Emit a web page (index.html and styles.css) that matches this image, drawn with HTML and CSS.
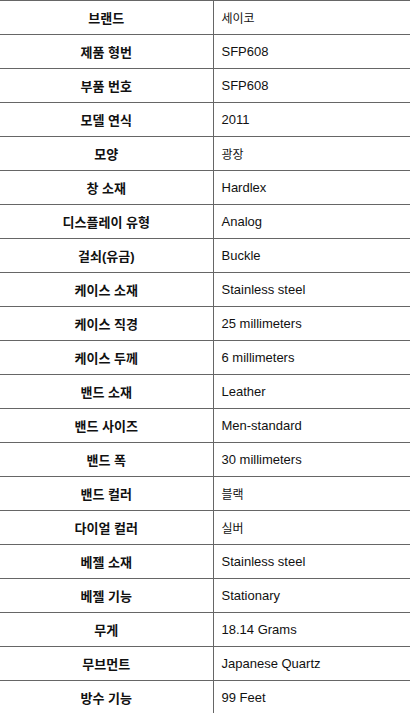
FILE: index.html
```html
<!DOCTYPE html>
<html lang="ko">
<head>
<meta charset="utf-8">
<link rel="stylesheet" href="styles.css">
</head>
<body>
<table class="specs">
<tbody>
<tr><th>브랜드</th><td><span class="ko">세이코</span></td></tr>
<tr><th>제품 형번</th><td>SFP608</td></tr>
<tr><th>부품 번호</th><td>SFP608</td></tr>
<tr><th>모델 연식</th><td>2011</td></tr>
<tr><th>모양</th><td><span class="ko">광장</span></td></tr>
<tr><th>창 소재</th><td>Hardlex</td></tr>
<tr><th>디스플레이 유형</th><td>Analog</td></tr>
<tr><th>걸쇠(유금)</th><td>Buckle</td></tr>
<tr><th>케이스 소재</th><td>Stainless steel</td></tr>
<tr><th>케이스 직경</th><td>25 millimeters</td></tr>
<tr><th>케이스 두께</th><td>6 millimeters</td></tr>
<tr><th>밴드 소재</th><td>Leather</td></tr>
<tr><th>밴드 사이즈</th><td>Men-standard</td></tr>
<tr><th>밴드 폭</th><td>30 millimeters</td></tr>
<tr><th>밴드 컬러</th><td><span class="ko">블랙</span></td></tr>
<tr><th>다이얼 컬러</th><td><span class="ko">실버</span></td></tr>
<tr><th>베젤 소재</th><td>Stainless steel</td></tr>
<tr><th>베젤 기능</th><td>Stationary</td></tr>
<tr><th>무게</th><td>18.14 Grams</td></tr>
<tr><th>무브먼트</th><td>Japanese Quartz</td></tr>
<tr><th>방수 기능</th><td>99 Feet</td></tr>
</tbody>
</table>
</body>
</html>
```

FILE: styles.css
```css
html, body {
  margin: 0;
  padding: 0;
  background: #ffffff;
}
body {
  font-family: "Liberation Sans", Arial, "Noto Sans CJK KR", sans-serif;
  font-size: 13px;
  color: #111111;
}
.specs {
  width: 410px;
  border-collapse: collapse;
  table-layout: fixed;
}
.specs tr {
  height: 34px;
}
.specs th,
.specs td {
  border-top: 1px solid #666666;
  border-bottom: 1px solid #666666;
  padding: 0 8px;
  height: 33px;
  box-sizing: border-box;
  vertical-align: middle;
}
.specs th {
  width: 213px;
  text-align: center;
  font-weight: bold;
  font-size: 13px;
  border-right: 1px solid #666666;
}
.specs td {
  text-align: left;
}
.specs .ko {
  font-size: 12px;
}
```
